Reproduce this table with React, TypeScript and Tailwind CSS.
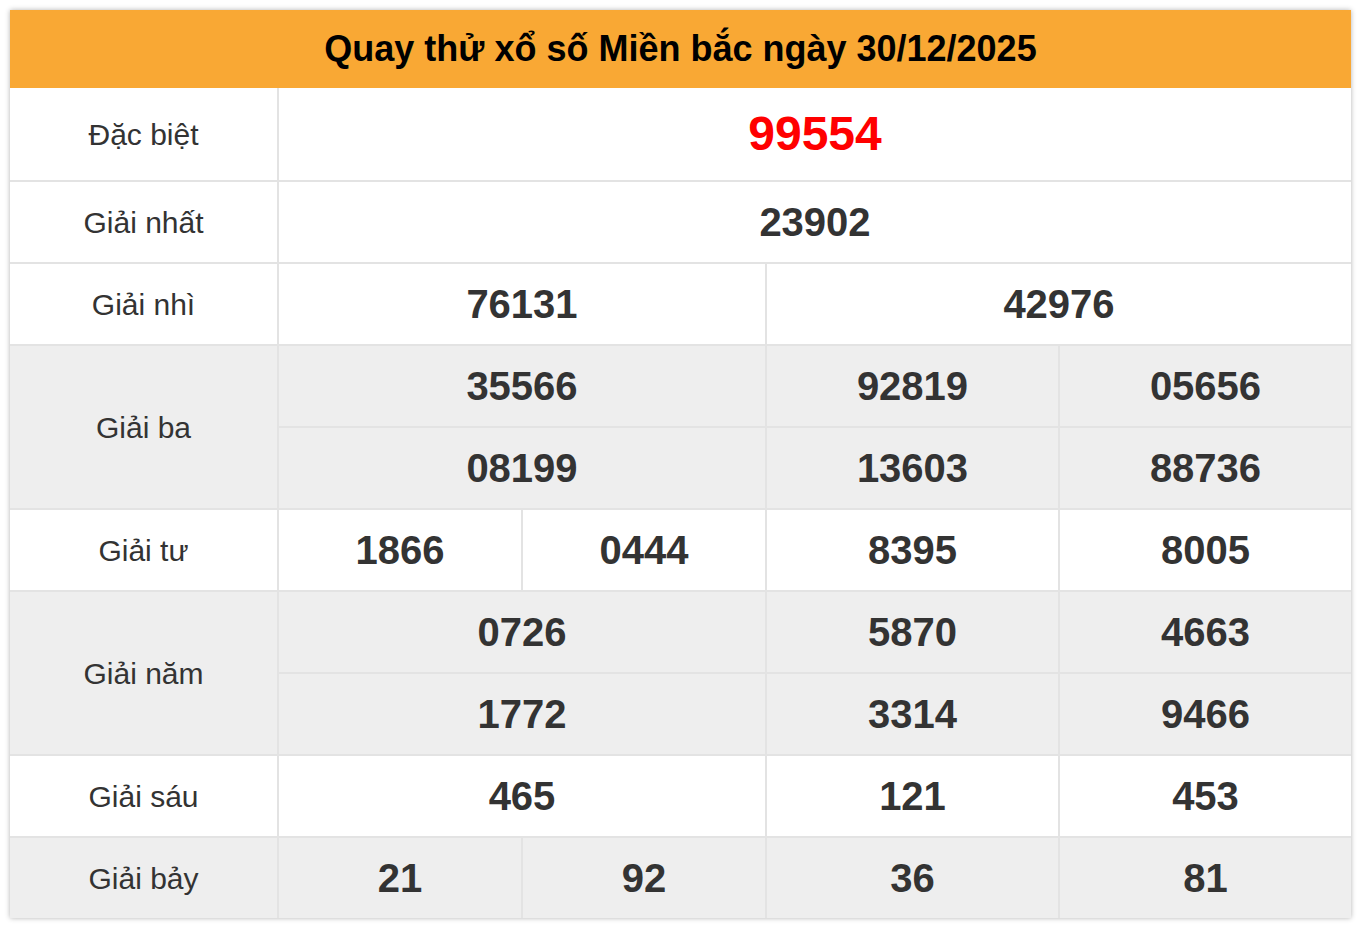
import React from "react";

type Cell = { v: string; span?: number };

const gray = "bg-[#eeeeee]";
const white = "bg-white";

function Label({ text, bg, tall }: { text: string; bg: string; tall?: boolean }) {
  return (
    <div
      className={`${bg} ${tall ? "row-span-2" : ""} flex items-center justify-center text-[30px] text-[#333333]`}
    >
      {text}
    </div>
  );
}

function Num({ cell, bg }: { cell: Cell; bg: string }) {
  const span =
    cell.span === 4 ? "col-span-4" : cell.span === 2 ? "col-span-2" : "col-span-1";
  return (
    <div className={`${bg} ${span} flex items-center justify-center text-[40px] font-bold text-[#333333]`}>
      {cell.v}
    </div>
  );
}

export default function App() {
  return (
    <div className="min-h-screen bg-white p-[10px] font-['Liberation_Sans',Arial,sans-serif]">
      <div className="w-[1341px] shadow-[0_0_5px_rgba(0,0,0,0.3)]">
        {/* Header */}
        <div className="flex h-[78px] items-center justify-center bg-[#f9a834] text-[36px] font-bold text-black">
          Quay thử xổ số Miền bắc ngày 30/12/2025
        </div>

        <div className="grid grid-cols-[267px_242px_242px_291px_291px] grid-rows-[92px_repeat(9,80px)] gap-[2px] bg-[#e3e3e3]">
          {/* Đặc biệt */}
          <Label text="Đặc biệt" bg={white} />
          <div className="col-span-4 flex items-center justify-center bg-white text-[48px] font-bold text-[#ff0000]">
            99554
          </div>

          {/* Giải nhất */}
          <Label text="Giải nhất" bg={white} />
          <Num cell={{ v: "23902", span: 4 }} bg={white} />

          {/* Giải nhì */}
          <Label text="Giải nhì" bg={white} />
          <Num cell={{ v: "76131", span: 2 }} bg={white} />
          <Num cell={{ v: "42976", span: 2 }} bg={white} />

          {/* Giải ba */}
          <Label text="Giải ba" bg={gray} tall />
          <Num cell={{ v: "35566", span: 2 }} bg={gray} />
          <Num cell={{ v: "92819" }} bg={gray} />
          <Num cell={{ v: "05656" }} bg={gray} />
          <Num cell={{ v: "08199", span: 2 }} bg={gray} />
          <Num cell={{ v: "13603" }} bg={gray} />
          <Num cell={{ v: "88736" }} bg={gray} />

          {/* Giải tư */}
          <Label text="Giải tư" bg={white} />
          <Num cell={{ v: "1866" }} bg={white} />
          <Num cell={{ v: "0444" }} bg={white} />
          <Num cell={{ v: "8395" }} bg={white} />
          <Num cell={{ v: "8005" }} bg={white} />

          {/* Giải năm */}
          <Label text="Giải năm" bg={gray} tall />
          <Num cell={{ v: "0726", span: 2 }} bg={gray} />
          <Num cell={{ v: "5870" }} bg={gray} />
          <Num cell={{ v: "4663" }} bg={gray} />
          <Num cell={{ v: "1772", span: 2 }} bg={gray} />
          <Num cell={{ v: "3314" }} bg={gray} />
          <Num cell={{ v: "9466" }} bg={gray} />

          {/* Giải sáu */}
          <Label text="Giải sáu" bg={white} />
          <Num cell={{ v: "465", span: 2 }} bg={white} />
          <Num cell={{ v: "121" }} bg={white} />
          <Num cell={{ v: "453" }} bg={white} />

          {/* Giải bảy */}
          <Label text="Giải bảy" bg={gray} />
          <Num cell={{ v: "21" }} bg={gray} />
          <Num cell={{ v: "92" }} bg={gray} />
          <Num cell={{ v: "36" }} bg={gray} />
          <Num cell={{ v: "81" }} bg={gray} />
        </div>
      </div>
    </div>
  );
}
